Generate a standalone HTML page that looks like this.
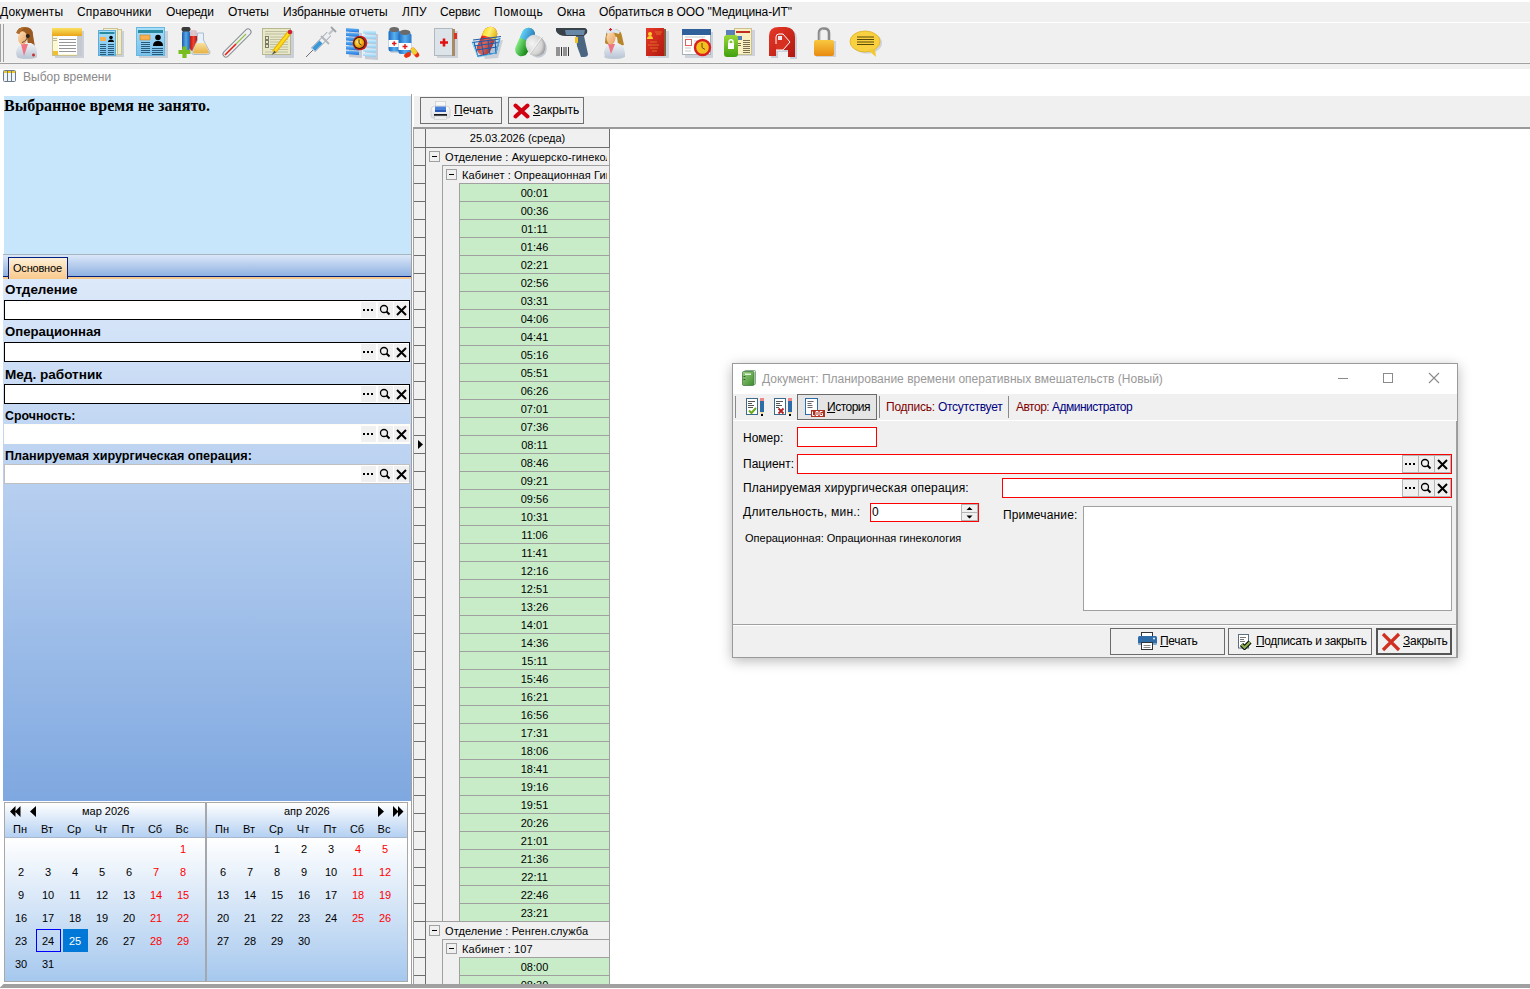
<!DOCTYPE html><html><head><meta charset="utf-8"><style>

*{box-sizing:border-box;margin:0;padding:0}
html,body{width:1530px;height:989px;overflow:hidden;background:#fff;font-family:"Liberation Sans",sans-serif;font-size:12px;color:#000}
.abs{position:absolute}
.t{position:absolute;white-space:nowrap;line-height:14px}
.u{text-decoration:underline}

</style></head><body>
<div class="abs" style="left:0;top:2px;width:1530px;height:20px;background:#f0f0f0"></div>
<div class="t" style="left:0px;top:5px;letter-spacing:0.15px">Документы</div>
<div class="t" style="left:77px;top:5px;letter-spacing:0.18px">Справочники</div>
<div class="t" style="left:166px;top:5px;letter-spacing:-0.2px">Очереди</div>
<div class="t" style="left:228px;top:5px;letter-spacing:-0.12px">Отчеты</div>
<div class="t" style="left:283px;top:5px;letter-spacing:0px">Избранные отчеты</div>
<div class="t" style="left:402px;top:5px;letter-spacing:0.3px">ЛПУ</div>
<div class="t" style="left:440px;top:5px;letter-spacing:-0.15px">Сервис</div>
<div class="t" style="left:494px;top:5px;letter-spacing:0.5px">Помощь</div>
<div class="t" style="left:557px;top:5px;letter-spacing:0.1px">Окна</div>
<div class="t" style="left:599px;top:5px;letter-spacing:-0.09px">Обратиться в ООО "Медицина-ИТ"</div>
<div class="abs" style="left:0;top:23px;width:1530px;height:40px;background:#f0f0f0"></div>
<div class="abs" style="left:0;top:62px;width:1530px;height:1px;background:#f4f4f4"></div>
<div class="abs" style="left:0;top:63px;width:1530px;height:1px;background:#a0a0a0"></div>
<div class="abs" style="left:0;top:64px;width:1530px;height:5px;background:#f0f0f0"></div>
<div class="abs" style="left:0;top:24px;width:1px;height:38px;background:#a0a0a0"></div>
<div class="abs" style="left:3px;top:24px;width:1px;height:38px;background:#a0a0a0"></div>

<svg class="abs" style="left:0;top:23px" width="900" height="40" viewBox="0 23 900 40">
<defs>
<linearGradient id="gY" x1="0" y1="0" x2="0" y2="1"><stop offset="0" stop-color="#fbe060"/><stop offset="1" stop-color="#e8a418"/></linearGradient>
<linearGradient id="gSkin" x1="0" y1="0" x2="1" y2="1"><stop offset="0" stop-color="#fde0b8"/><stop offset="1" stop-color="#e8a060"/></linearGradient>
<linearGradient id="gCoat" x1="0" y1="0" x2="0" y2="1"><stop offset="0" stop-color="#f0f4f8"/><stop offset="1" stop-color="#b8c4d4"/></linearGradient>
<linearGradient id="gBlue" x1="0" y1="0" x2="0" y2="1"><stop offset="0" stop-color="#a8e0fa"/><stop offset="1" stop-color="#78c0ec"/></linearGradient>
<linearGradient id="gRed" x1="0" y1="0" x2="1" y2="1"><stop offset="0" stop-color="#e83828"/><stop offset="1" stop-color="#b01810"/></linearGradient>
<linearGradient id="gOr" x1="0" y1="0" x2="0" y2="1"><stop offset="0" stop-color="#f8c840"/><stop offset="1" stop-color="#e88a10"/></linearGradient>
<linearGradient id="gGreen" x1="0" y1="0" x2="0" y2="1"><stop offset="0" stop-color="#98d838"/><stop offset="1" stop-color="#40a010"/></linearGradient>
</defs>
<!-- 1 operator -->
<ellipse cx="27" cy="57" rx="10" ry="2" fill="rgba(40,60,90,0.18)"/>
<path d="M17 33 Q17 27 25 27 Q33 27 33 35 L35 47 Q31 48 28 46 L27 37Z" fill="#9a5a20"/>
<path d="M16 53 Q17 45 23 43 L31 43 Q37 45 37 53 L37 57 Q27 60 17 57Z" fill="url(#gCoat)"/>
<path d="M21 44 L28 44 L24 56Z" fill="#f07484"/>
<ellipse cx="22.5" cy="38" rx="4.6" ry="6.8" fill="url(#gSkin)"/>
<path d="M16 33 Q18 26.5 26 27 Q21 29 19.5 34Z" fill="#b06c2c"/>
<path d="M27.5 36 Q27 41 22 42.5" stroke="#333" stroke-width="0.8" fill="none"/>
<circle cx="27.8" cy="36" r="2" fill="#222"/>
<path d="M32 55h3M33.5 53.5v3" stroke="#c83030" stroke-width="1.6"/>
<!-- 2 yellow window -->
<rect x="55" y="31" width="29" height="27" fill="rgba(70,90,130,0.22)"/>
<rect x="52.5" y="34.5" width="27" height="21" fill="#fbf8d4" stroke="#c8c090"/>
<rect x="58" y="36" width="19" height="18" fill="#fff"/>
<path d="M59 39.5h17M59 42.5h17M59 45.5h17M59 48.5h17M59 51.5h17" stroke="#8a8a8a" stroke-width="0.9"/>
<rect x="77" y="35" width="5" height="21" fill="#c4cad0"/>
<rect x="52" y="28" width="30" height="8" fill="url(#gY)"/>
<rect x="53" y="51" width="5" height="4" fill="#f0c030"/>
<path d="M53 38.5h4M53 40.5h4" stroke="#999" stroke-width="0.7"/>
<!-- 3 blue docs -->
<rect x="101" y="31" width="23" height="26" fill="rgba(70,90,130,0.22)"/>
<rect x="106.5" y="29.5" width="15" height="25" fill="#eeeacc" stroke="#c8c498"/>
<rect x="103.5" y="28.5" width="14" height="26" fill="#f4f0d0" stroke="#c8c498"/>
<rect x="98.5" y="30.5" width="17" height="25" fill="url(#gBlue)" stroke="#60acd8"/>
<rect x="99.5" y="32" width="15" height="2" fill="#2a8aa0"/>
<rect x="100" y="37" width="6" height="4" fill="#f8b050"/>
<circle cx="111" cy="37.5" r="1.8" fill="#000"/><path d="M108 42 Q108 39.5 111 39.5 Q114 39.5 114 42Z" fill="#000"/>
<path d="M100 44.5h6M100 46.5h6M100 48.5h6M100 50.5h6M100 52.5h6M100 54.5h6M108 44.5h6M108 46.5h6M108 48.5h6M108 50.5h6M108 52.5h6M108 54.5h6" stroke="#2a5a7a" stroke-width="1"/>
<!-- 4 blue card -->
<rect x="139" y="31" width="29" height="27" fill="rgba(70,90,130,0.22)"/>
<rect x="136.5" y="27.5" width="28" height="28" fill="url(#gBlue)" stroke="#68b8e0"/>
<rect x="138" y="30" width="25" height="3" fill="#2a8aa0"/>
<rect x="140" y="35" width="10" height="5" fill="#f8b050" stroke="#c88030" stroke-width="0.6"/>
<circle cx="158" cy="37.5" r="2.8" fill="#000"/><path d="M153 46 Q153 41 158 41 Q163 41 163 46Z" fill="#000"/>
<path d="M141 42.5h9M141 44.5h9M141 46.5h9M141 48.5h9M141 50.5h9M141 52.5h9M152 48.5h11M152 50.5h11M152 52.5h11M152 54.5h11" stroke="#2a5a7a" stroke-width="1"/>
<!-- 5 flasks -->
<defs><linearGradient id="gTube" x1="0" y1="0" x2="1" y2="0"><stop offset="0" stop-color="#1a5aa8"/><stop offset="0.5" stop-color="#58a8e8"/><stop offset="1" stop-color="#1a60b0"/></linearGradient>
<linearGradient id="gTubeR" x1="0" y1="0" x2="1" y2="0"><stop offset="0" stop-color="#b81810"/><stop offset="0.5" stop-color="#f04030"/><stop offset="1" stop-color="#b01810"/></linearGradient>
<linearGradient id="gFlask" x1="0" y1="0" x2="0" y2="1"><stop offset="0" stop-color="#f8e0a0"/><stop offset="1" stop-color="#e8b040"/></linearGradient></defs>
<rect x="190" y="30" width="7" height="21" rx="3" fill="url(#gTubeR)"/>
<rect x="190" y="30" width="7" height="6" fill="#dde8f4" opacity="0.8"/>
<rect x="182" y="30" width="8" height="21" rx="3.5" fill="url(#gTube)"/>
<rect x="181.5" y="27" width="9" height="4.5" rx="2" fill="#3a3a3a"/>
<path d="M197.5 33 L203.5 33 L203.5 40 L210 52 Q210.5 54.5 207.5 54.5 L194 54.5 Q191 54.5 192 52 L197.5 40Z" fill="#e8f0f8" stroke="#9ab0c8" stroke-width="0.8"/>
<path d="M196 43 L205 43 L209 52 Q209.5 53.5 207.5 53.5 L194.5 53.5 Q192.5 53.5 193 52Z" fill="url(#gFlask)"/>
<path d="M178.5 52h12M184.5 46.5v11.5" stroke="#78bc20" stroke-width="4.2"/>
<!-- 6 thermometer -->
<path d="M226 54 L248 32" stroke="#8a8e94" stroke-width="7" stroke-linecap="round"/>
<path d="M226 54 L248 32" stroke="#eef0f2" stroke-width="5" stroke-linecap="round"/>
<path d="M225 55 L236 44" stroke="#e02010" stroke-width="1.6"/>
<path d="M236 44 L246 34" stroke="#90c040" stroke-width="1.1"/>
<!-- 7 notepad -->
<rect x="265" y="31" width="29" height="27" fill="rgba(70,90,130,0.22)"/>
<rect x="262.5" y="28.5" width="28" height="26" fill="#e8e8c8" stroke="#b8b890"/>
<path d="M265 31.5h23M265 34h23M270 37h18M270 39.5h18M270 42h18M270 44.5h18M270 47h18M270 49.5h18M265 52h23" stroke="#b4b498" stroke-width="0.8"/>
<rect x="265.5" y="36.5" width="3" height="3" fill="none" stroke="#707060" stroke-width="0.9"/>
<rect x="265.5" y="40.5" width="3" height="3" fill="none" stroke="#707060" stroke-width="0.9"/>
<rect x="265.5" y="44.5" width="3" height="3" fill="none" stroke="#707060" stroke-width="0.9"/>
<path d="M274 52 L289 33" stroke="#e8b000" stroke-width="4.5"/>
<path d="M274 52 L289 33" stroke="#fcdc20" stroke-width="2.5"/>
<path d="M271.5 55 L274.5 50.5 L276 52.5Z" fill="#555"/>
<circle cx="290" cy="32" r="2.3" fill="#d02030"/>
<!-- 8 syringe -->
<path d="M306 57 L313 50" stroke="#707070" stroke-width="1"/>
<path d="M313 50 L329 34" stroke="#9aa0a8" stroke-width="6"/>
<path d="M313 50 L329 34" stroke="#eef0f4" stroke-width="4.5"/>
<path d="M313.5 49.5 L321 42" stroke="#3a98d8" stroke-width="4"/>
<path d="M321 36 L329 44" stroke="#b0b4b8" stroke-width="1.8"/>
<path d="M329 34 L334 29" stroke="#c0c4c8" stroke-width="2.2"/>
<path d="M331 27 L336 32" stroke="#a0a4a8" stroke-width="1.8"/>
<!-- 9 table+clock -->
<defs>
<linearGradient id="gBar" x1="0" y1="0" x2="0" y2="1"><stop offset="0" stop-color="#6ab8f8"/><stop offset="1" stop-color="#1a70d8"/></linearGradient>
<linearGradient id="gBar2" x1="0" y1="0" x2="0" y2="1"><stop offset="0" stop-color="#e0f4fe"/><stop offset="1" stop-color="#88ccf4"/></linearGradient>
<radialGradient id="gClk" cx="0.4" cy="0.4" r="0.6"><stop offset="0" stop-color="#fff0a0"/><stop offset="0.5" stop-color="#f8c020"/><stop offset="1" stop-color="#e08010"/></radialGradient>
</defs>
<path d="M349 32 L362 33 L362 58 L349 57Z" fill="rgba(70,90,130,0.25)"/>
<path d="M365 33 L378 34 L378 60 L365 59Z" fill="rgba(70,90,130,0.25)"/>
<g fill="url(#gBar)"><path d="M346 28 L359 29 L359 32.5 L346 31.5Z"/><path d="M346 32.5 L359 33.5 L359 37 L346 36Z"/><path d="M346 37 L359 38 L359 41.5 L346 40.5Z"/><path d="M346 41.5 L359 42.5 L359 46 L346 45Z"/><path d="M346 46 L359 47 L359 50.5 L346 49.5Z"/><path d="M346 50.5 L359 51.5 L359 55 L346 54Z"/></g>
<g fill="url(#gBar2)"><path d="M363 30 L376 31 L376 34.5 L363 33.5Z"/><path d="M363 34.5 L376 35.5 L376 39 L363 38Z"/><path d="M363 39 L376 40 L376 43.5 L363 42.5Z"/><path d="M363 43.5 L376 44.5 L376 48 L363 47Z"/><path d="M363 48 L376 49 L376 52.5 L363 51.5Z"/><path d="M363 52.5 L376 53.5 L376 57 L363 56Z"/></g>
<circle cx="360" cy="43" r="7.3" fill="#c81818"/>
<circle cx="359.3" cy="43" r="6" fill="#302010"/>
<circle cx="359.3" cy="43" r="5" fill="url(#gClk)"/>
<path d="M359 39.5 V43.5 L361.5 45" stroke="#503000" stroke-width="1" fill="none"/>
<!-- 10 vials -->
<defs><linearGradient id="gVial" x1="0" y1="0" x2="1" y2="0"><stop offset="0" stop-color="#1a68c0"/><stop offset="0.5" stop-color="#58b0f0"/><stop offset="1" stop-color="#2a78c8"/></linearGradient></defs>
<rect x="390" y="31" width="12" height="22" rx="2" fill="rgba(70,90,130,0.2)"/>
<rect x="388.5" y="30" width="11.5" height="21.5" rx="2.5" fill="url(#gVial)"/>
<rect x="388.5" y="40" width="11.5" height="7" fill="#fff"/>
<ellipse cx="394.2" cy="29.5" rx="4.8" ry="2.6" fill="#6a6a6a"/>
<path d="M392 43.5h4.5M394.2 41.2v4.6" stroke="#e01818" stroke-width="1.4"/>
<rect x="398.5" y="33" width="13" height="21" rx="2.5" fill="url(#gVial)"/>
<rect x="398.5" y="43" width="13" height="7" fill="#fff"/>
<ellipse cx="405" cy="32.3" rx="5.3" ry="2.6" fill="#6a6a6a"/>
<path d="M402.5 46.5h5M405 44v5" stroke="#e01818" stroke-width="1.4"/>
<path d="M413 50 L417 55" stroke="#e83010" stroke-width="4.6" stroke-linecap="round"/>
<path d="M413 50 L414.8 52.2" stroke="#f0d030" stroke-width="4.6" stroke-linecap="round"/>
<ellipse cx="407.5" cy="55" rx="3.6" ry="2.4" transform="rotate(-30 407.5 55)" fill="#e83010"/>
<!-- 11 red-cross book -->
<rect x="437" y="31" width="21" height="27" fill="rgba(70,90,130,0.2)"/>
<rect x="434.5" y="28.5" width="18" height="27" fill="#dce4ea" stroke="#b0b8c0"/>
<rect x="452" y="29" width="3" height="27" fill="#a88a64"/>
<rect x="454" y="33" width="3" height="6" fill="#e03020"/>
<path d="M440 42.5h8M444 38.5v8" stroke="#e01010" stroke-width="2.6"/>
<!-- 12 basket -->
<defs>
<linearGradient id="gCapY" x1="0" y1="0" x2="1" y2="0"><stop offset="0" stop-color="#f8e020"/><stop offset="0.4" stop-color="#fff070"/><stop offset="1" stop-color="#e0b010"/></linearGradient>
<linearGradient id="gCapR" x1="0" y1="0" x2="1" y2="0"><stop offset="0" stop-color="#e01808"/><stop offset="0.4" stop-color="#ff5030"/><stop offset="1" stop-color="#c01000"/></linearGradient>
<radialGradient id="gTab" cx="0.4" cy="0.35" r="0.7"><stop offset="0" stop-color="#f4f4f4"/><stop offset="0.7" stop-color="#d4d4d4"/><stop offset="1" stop-color="#909090"/></radialGradient>
<linearGradient id="gBlu2" x1="0" y1="0" x2="1" y2="0"><stop offset="0" stop-color="#60d0f8"/><stop offset="1" stop-color="#2a78b8"/></linearGradient>
<linearGradient id="gGrn2" x1="0" y1="0" x2="1" y2="0"><stop offset="0" stop-color="#80e880"/><stop offset="1" stop-color="#108010"/></linearGradient>
</defs>
<path d="M478 43 L503 40 L498 58 L485 59Z" fill="rgba(70,90,130,0.22)"/>
<g transform="rotate(24 487 41)">
<rect x="480" y="26" width="14" height="30" rx="7" fill="url(#gCapR)"/>
<path d="M480 38 V33 A7 7 0 0 1 494 33 V38 Q487 35 480 38Z" fill="url(#gCapY)"/>
</g>
<path d="M472 41 L500 37 L496 53 L478 57Z" fill="rgba(90,170,230,0.25)"/>
<path d="M473 40 L501 36.5 M472 42.5 L500 39 M474 46 L499 42.5 M476 50 L497 47 M478 56 L496 53 M474 42 L478 57 M481 41 L484 56 M488 40 L490 55 M495 39 L496 54 M500 38 L496 53" stroke="#1c5aa8" stroke-width="1" fill="none"/>
<path d="M472 42 L478 57 L496 53 L500 38" stroke="#50c0f0" stroke-width="0.8" fill="none"/>
<!-- 13 pills -->

<g transform="translate(3 0) rotate(24 522 42)">
<rect x="515.5" y="27" width="13" height="30" rx="6.5" fill="url(#gGrn2)"/>
<path d="M515.5 40 V33.5 A6.5 6.5 0 0 1 528.5 33.5 V40Z" fill="url(#gBlu2)"/>
</g>
<ellipse cx="537" cy="47" rx="9.5" ry="11" transform="rotate(-30 537 47)" fill="rgba(70,90,130,0.25)"/>
<ellipse cx="535.5" cy="45.5" rx="9.5" ry="11" transform="rotate(-30 535.5 45.5)" fill="url(#gTab)"/>
<path d="M529 54.5 L542 36.5" stroke="#f8f8f8" stroke-width="0.9"/>
<path d="M530 55 L543 37" stroke="#b8b8b8" stroke-width="0.5"/>
<!-- 14 scanner -->
<path d="M556 28 L585 28 Q588 29 587 33 L584 36 L566 36 Q558 36 556 31Z" fill="#384048"/>
<path d="M565 30 L585 30 L584 35 L566 35Z" fill="#6888a8"/>
<path d="M576 36 L584 36 L588 54 Q588 57 584 57 L581 57 L577 46Z" fill="#4a6680"/>
<rect x="575" y="37" width="3" height="6" fill="#f0c020"/>
<path d="M557 47v9M559 47v9M561.5 47v9M564 47v9M566 47v9M568.5 47v9" stroke="#333" stroke-width="1"/>
<!-- 15 nurse -->
<ellipse cx="614" cy="57" rx="10" ry="2" fill="rgba(40,60,90,0.18)"/>
<path d="M606 35 Q606 29 614 29 Q621 29 622 36 L624 45 Q620 46 618 44 L617 37Z" fill="#b8862a"/><path d="M606.5 33 Q605 38 605 43 Q607 45 609 44 L608 36Z" fill="#b8862a"/>
<path d="M604 53 Q605 45 610 43 L618 43 Q624 45 625 53 L625 57 Q614 60 605 57Z" fill="url(#gCoat)"/>
<path d="M608 44 L615 44 L611 54Z" fill="#f07484"/>
<ellipse cx="611" cy="38" rx="4.5" ry="6.5" fill="url(#gSkin)"/>
<path d="M606 31 Q612 26 620 31 L619 34 Q612 31 607 34Z" fill="#dce6f2"/>
<path d="M609 29.5h3M610.5 28v3" stroke="#d02020" stroke-width="1.2"/>
<!-- 16 red book -->
<rect x="648" y="31" width="21" height="27" fill="rgba(70,90,130,0.2)"/>
<rect x="646" y="28" width="18" height="28" fill="url(#gRed)"/>
<rect x="664" y="29" width="2" height="27" fill="#806040"/>
<circle cx="650" cy="34" r="2" fill="#f8d030"/><path d="M647 39 Q647 36 650 36 Q653 36 653 39Z" fill="#f8d030"/>
<path d="M655 32h7M656 34h5M650 42h7M648 45h11M650 48h8M652 51h5" stroke="#f0a030" stroke-width="0.6"/>
<!-- 17 calendar+clock -->
<rect x="685" y="32" width="28" height="26" fill="rgba(70,90,130,0.2)"/>
<rect x="682.5" y="29.5" width="28" height="25" fill="#fff" stroke="#a8b0b8"/>
<rect x="682" y="29" width="29" height="6" fill="#30609a"/>
<rect x="685.5" y="39.5" width="6" height="6" fill="none" stroke="#e06060"/>
<path d="M685 37h20M694 41h5M694 44h5M685 48h6M685 51h6" stroke="#b0b0b0" stroke-width="0.7"/>
<circle cx="702.5" cy="47.5" r="7.5" fill="#f4c020" stroke="#d82020" stroke-width="2.4"/>
<path d="M702 43 V47.5 L705 49.5" stroke="#6a4a00" stroke-width="1" fill="none"/>
<!-- 18 usb+doc -->
<rect x="736" y="30" width="19" height="26" fill="rgba(70,90,130,0.2)"/>
<rect x="734.5" y="28.5" width="17" height="26" fill="#f8f0c0" stroke="#c8c090"/>
<rect x="736" y="31" width="14" height="2" fill="#c03020"/>
<rect x="737" y="36" width="5" height="4" fill="#5080c0"/>
<path d="M743 40.5h7M743 42.5h7M743 44.5h7M743 46.5h7M743 48.5h7M743 50.5h7M743 52.5h7M737 43.5h4M737 45.5h4" stroke="#7a7050" stroke-width="1"/>
<rect x="726" y="30" width="9" height="6" fill="#5a80b8"/>
<rect x="724" y="35" width="14" height="22" rx="3" fill="url(#gGreen)"/>
<rect x="728" y="43" width="6" height="6" fill="#fff"/>
<path d="M729 43 V41 Q731 38.5 733 41 V43" stroke="#fff" stroke-width="1.3" fill="none"/>
<!-- 19 red A -->
<path d="M771 58 L771 38 Q771 29 781 29 L788 29 Q797 30 797 39 L797 59 L790 59 L790 52 L778 52 L778 58Z" fill="rgba(70,90,130,0.22)"/>
<path d="M769 56 L769 36 Q769 27 779 27 L786 27 Q795 28 795 37 L795 57 L788 57 L788 50 L776 50 L776 56Z" fill="url(#gRed)"/>
<path d="M776 44 L776 37 Q776 34 779 34 L783 34 L790 42 L783 50 L776 50" stroke="#fff" stroke-width="1" fill="#d83020"/>
<path d="M778 36 L782 36 L782 40 L778 40Z" fill="#e8e8f0"/>
<!-- 20 lock -->
<path d="M819 42 L819 33 Q819 28.5 824 28.5 Q829 28.5 829 33 L829 42" stroke="#8a8a8a" stroke-width="2.6" fill="none"/><path d="M820 41 L820 33 Q820 30 823 29.5" stroke="#d8d8d8" stroke-width="0.8" fill="none"/>
<rect x="816" y="41" width="20" height="16" fill="rgba(70,90,130,0.2)"/>
<rect x="814" y="40" width="20" height="16" rx="2" fill="url(#gOr)"/>
<!-- 21 speech -->
<ellipse cx="867" cy="43" rx="15" ry="10.5" fill="rgba(70,90,130,0.2)"/>
<ellipse cx="865" cy="41.5" rx="15" ry="10.5" fill="#f8d040" stroke="#e0b020" stroke-width="0.8"/>
<path d="M868 50 L876 57 L875 49Z" fill="#f0c830"/>
<path d="M857 37h17M857 39.5h17M857 42h17M857 44.5h17" stroke="#5a4a08" stroke-width="1"/>
</svg>

<div class="t" style="left:23px;top:70px;color:#8a8a8a">Выбор времени</div>
<svg class="abs" style="left:3px;top:70px" width="14" height="13"><rect x="0.5" y="0.5" width="12" height="11" rx="1" fill="#eef6fc" stroke="#6a7a88"/><rect x="1" y="1" width="11" height="2" fill="#f0c820"/><path d="M4.5 1v11M8.5 1v11" stroke="#6a7a88"/></svg>
<div class="abs" style="left:4px;top:96px;width:407px;height:158px;background:#c8e6fb"></div>
<div class="t" style="left:4px;top:97px;font:bold 16px 'Liberation Serif',serif;line-height:18px">Выбранное время не занято.</div>
<div class="abs" style="left:3px;top:254px;width:408px;height:1px;background:#a8b4c0"></div>
<div class="abs" style="left:3px;top:255px;width:408px;height:21px;background:linear-gradient(#dbe7f8,#8fb1e2)"></div>
<div class="abs" style="left:3px;top:276px;width:408px;height:1px;background:#00207f"></div>
<div class="abs" style="left:3px;top:277px;width:408px;height:2px;background:#f8c88a"></div>
<div class="abs" style="left:8px;top:257px;width:60px;height:22px;border:1px solid #00207f;border-bottom:none;background:linear-gradient(#fdf0d8,#f9c98c)"></div>
<div class="t" style="left:13px;top:261px;font-size:11px;letter-spacing:-0.2px">Основное</div>
<div class="abs" style="left:3px;top:279px;width:408px;height:522px;background:linear-gradient(#dce9fa,#7fa8e0)"></div>
<div class="t" style="left:5px;top:283px;font-weight:bold;transform:scaleX(1.12);transform-origin:0 0">Отделение</div>
<div class="abs" style="left:4px;top:300px;width:406px;height:20px;background:#fff;border:1px solid #000"></div>
<div class="abs" style="left:361px;top:302px;width:15px;height:16px;background:#f0f0f0"></div>
<div class="abs" style="left:378px;top:302px;width:15px;height:16px;background:#f0f0f0"></div>
<div class="abs" style="left:394px;top:302px;width:15px;height:16px;background:#f0f0f0"></div>
<div class="abs" style="left:363px;top:309px;width:2px;height:2px;background:#000;box-shadow:4px 0 #000,8px 0 #000"></div>
<svg class="abs" style="left:379px;top:304px" width="13" height="13"><circle cx="5" cy="5" r="3.5" fill="none" stroke="#000" stroke-width="1.3"/><line x1="7.5" y1="7.5" x2="10.5" y2="10.5" stroke="#000" stroke-width="2"/></svg>
<svg class="abs" style="left:395px;top:304px" width="13" height="13"><path d="M2 2L11 11M11 2L2 11" stroke="#000" stroke-width="2"/></svg>
<div class="t" style="left:5px;top:325px;font-weight:bold;transform:scaleX(1.097);transform-origin:0 0">Операционная</div>
<div class="abs" style="left:4px;top:342px;width:406px;height:20px;background:#fff;border:1px solid #000"></div>
<div class="abs" style="left:361px;top:344px;width:15px;height:16px;background:#f0f0f0"></div>
<div class="abs" style="left:378px;top:344px;width:15px;height:16px;background:#f0f0f0"></div>
<div class="abs" style="left:394px;top:344px;width:15px;height:16px;background:#f0f0f0"></div>
<div class="abs" style="left:363px;top:351px;width:2px;height:2px;background:#000;box-shadow:4px 0 #000,8px 0 #000"></div>
<svg class="abs" style="left:379px;top:346px" width="13" height="13"><circle cx="5" cy="5" r="3.5" fill="none" stroke="#000" stroke-width="1.3"/><line x1="7.5" y1="7.5" x2="10.5" y2="10.5" stroke="#000" stroke-width="2"/></svg>
<svg class="abs" style="left:395px;top:346px" width="13" height="13"><path d="M2 2L11 11M11 2L2 11" stroke="#000" stroke-width="2"/></svg>
<div class="t" style="left:5px;top:368px;font-weight:bold;transform:scaleX(1.13);transform-origin:0 0">Мед. работник</div>
<div class="abs" style="left:4px;top:384px;width:406px;height:20px;background:#fff;border:1px solid #000"></div>
<div class="abs" style="left:361px;top:386px;width:15px;height:16px;background:#f0f0f0"></div>
<div class="abs" style="left:378px;top:386px;width:15px;height:16px;background:#f0f0f0"></div>
<div class="abs" style="left:394px;top:386px;width:15px;height:16px;background:#f0f0f0"></div>
<div class="abs" style="left:363px;top:393px;width:2px;height:2px;background:#000;box-shadow:4px 0 #000,8px 0 #000"></div>
<svg class="abs" style="left:379px;top:388px" width="13" height="13"><circle cx="5" cy="5" r="3.5" fill="none" stroke="#000" stroke-width="1.3"/><line x1="7.5" y1="7.5" x2="10.5" y2="10.5" stroke="#000" stroke-width="2"/></svg>
<svg class="abs" style="left:395px;top:388px" width="13" height="13"><path d="M2 2L11 11M11 2L2 11" stroke="#000" stroke-width="2"/></svg>
<div class="t" style="left:5px;top:409px;font-weight:bold;transform:scaleX(1.03);transform-origin:0 0">Срочность:</div>
<div class="abs" style="left:4px;top:424px;width:406px;height:20px;background:#fff;border:1px solid #fffdf4"></div>
<div class="abs" style="left:361px;top:426px;width:15px;height:16px;background:#f0f0f0"></div>
<div class="abs" style="left:378px;top:426px;width:15px;height:16px;background:#f0f0f0"></div>
<div class="abs" style="left:394px;top:426px;width:15px;height:16px;background:#f0f0f0"></div>
<div class="abs" style="left:363px;top:433px;width:2px;height:2px;background:#000;box-shadow:4px 0 #000,8px 0 #000"></div>
<svg class="abs" style="left:379px;top:428px" width="13" height="13"><circle cx="5" cy="5" r="3.5" fill="none" stroke="#000" stroke-width="1.3"/><line x1="7.5" y1="7.5" x2="10.5" y2="10.5" stroke="#000" stroke-width="2"/></svg>
<svg class="abs" style="left:395px;top:428px" width="13" height="13"><path d="M2 2L11 11M11 2L2 11" stroke="#000" stroke-width="2"/></svg>
<div class="t" style="left:5px;top:449px;font-weight:bold;transform:scaleX(1.05);transform-origin:0 0">Планируемая хирургическая операция:</div>
<div class="abs" style="left:4px;top:464px;width:406px;height:20px;background:#fff;border:1px solid #c0c0c0"></div>
<div class="abs" style="left:361px;top:466px;width:15px;height:16px;background:#f0f0f0"></div>
<div class="abs" style="left:378px;top:466px;width:15px;height:16px;background:#f0f0f0"></div>
<div class="abs" style="left:394px;top:466px;width:15px;height:16px;background:#f0f0f0"></div>
<div class="abs" style="left:363px;top:473px;width:2px;height:2px;background:#000;box-shadow:4px 0 #000,8px 0 #000"></div>
<svg class="abs" style="left:379px;top:468px" width="13" height="13"><circle cx="5" cy="5" r="3.5" fill="none" stroke="#000" stroke-width="1.3"/><line x1="7.5" y1="7.5" x2="10.5" y2="10.5" stroke="#000" stroke-width="2"/></svg>
<svg class="abs" style="left:395px;top:468px" width="13" height="13"><path d="M2 2L11 11M11 2L2 11" stroke="#000" stroke-width="2"/></svg>
<div class="abs" style="left:4px;top:801px;width:407px;height:183px;background:#fff"></div>
<div class="abs" style="left:4px;top:802px;width:404px;height:180px;border:1px solid #a8a8a8;background:#fff"></div>
<div class="abs" style="left:5px;top:803px;width:200px;height:34px;background:linear-gradient(#fff,#b4d0f2)"></div>
<div class="t" style="left:82px;top:804px;font-size:11px">мар 2026</div>
<div class="t" style="left:6px;top:822px;width:28px;text-align:center;font-size:11px">Пн</div>
<div class="t" style="left:33px;top:822px;width:28px;text-align:center;font-size:11px">Вт</div>
<div class="t" style="left:60px;top:822px;width:28px;text-align:center;font-size:11px">Ср</div>
<div class="t" style="left:87px;top:822px;width:28px;text-align:center;font-size:11px">Чт</div>
<div class="t" style="left:114px;top:822px;width:28px;text-align:center;font-size:11px">Пт</div>
<div class="t" style="left:141px;top:822px;width:28px;text-align:center;font-size:11px">Сб</div>
<div class="t" style="left:168px;top:822px;width:28px;text-align:center;font-size:11px">Вс</div>
<div class="abs" style="left:5px;top:837px;width:200px;height:1px;background:#a8b8cc"></div>
<div class="abs" style="left:5px;top:838px;width:200px;height:143px;background:linear-gradient(#fff,#a6c8ee)"></div>
<div class="t" style="left:169px;top:842px;width:28px;text-align:center;font-size:11px;color:#f00">1</div>
<div class="t" style="left:7px;top:865px;width:28px;text-align:center;font-size:11px;color:#000">2</div>
<div class="t" style="left:34px;top:865px;width:28px;text-align:center;font-size:11px;color:#000">3</div>
<div class="t" style="left:61px;top:865px;width:28px;text-align:center;font-size:11px;color:#000">4</div>
<div class="t" style="left:88px;top:865px;width:28px;text-align:center;font-size:11px;color:#000">5</div>
<div class="t" style="left:115px;top:865px;width:28px;text-align:center;font-size:11px;color:#000">6</div>
<div class="t" style="left:142px;top:865px;width:28px;text-align:center;font-size:11px;color:#f00">7</div>
<div class="t" style="left:169px;top:865px;width:28px;text-align:center;font-size:11px;color:#f00">8</div>
<div class="t" style="left:7px;top:888px;width:28px;text-align:center;font-size:11px;color:#000">9</div>
<div class="t" style="left:34px;top:888px;width:28px;text-align:center;font-size:11px;color:#000">10</div>
<div class="t" style="left:61px;top:888px;width:28px;text-align:center;font-size:11px;color:#000">11</div>
<div class="t" style="left:88px;top:888px;width:28px;text-align:center;font-size:11px;color:#000">12</div>
<div class="t" style="left:115px;top:888px;width:28px;text-align:center;font-size:11px;color:#000">13</div>
<div class="t" style="left:142px;top:888px;width:28px;text-align:center;font-size:11px;color:#f00">14</div>
<div class="t" style="left:169px;top:888px;width:28px;text-align:center;font-size:11px;color:#f00">15</div>
<div class="t" style="left:7px;top:911px;width:28px;text-align:center;font-size:11px;color:#000">16</div>
<div class="t" style="left:34px;top:911px;width:28px;text-align:center;font-size:11px;color:#000">17</div>
<div class="t" style="left:61px;top:911px;width:28px;text-align:center;font-size:11px;color:#000">18</div>
<div class="t" style="left:88px;top:911px;width:28px;text-align:center;font-size:11px;color:#000">19</div>
<div class="t" style="left:115px;top:911px;width:28px;text-align:center;font-size:11px;color:#000">20</div>
<div class="t" style="left:142px;top:911px;width:28px;text-align:center;font-size:11px;color:#f00">21</div>
<div class="t" style="left:169px;top:911px;width:28px;text-align:center;font-size:11px;color:#f00">22</div>
<div class="t" style="left:7px;top:934px;width:28px;text-align:center;font-size:11px;color:#000">23</div>
<div class="abs" style="left:36px;top:929px;width:25px;height:23px;border:1px solid #0000ff"></div>
<div class="t" style="left:34px;top:934px;width:28px;text-align:center;font-size:11px;color:#000">24</div>
<div class="abs" style="left:63px;top:929px;width:25px;height:23px;background:#0078d7"></div>
<div class="t" style="left:61px;top:934px;width:28px;text-align:center;font-size:11px;color:#fff">25</div>
<div class="t" style="left:88px;top:934px;width:28px;text-align:center;font-size:11px;color:#000">26</div>
<div class="t" style="left:115px;top:934px;width:28px;text-align:center;font-size:11px;color:#000">27</div>
<div class="t" style="left:142px;top:934px;width:28px;text-align:center;font-size:11px;color:#f00">28</div>
<div class="t" style="left:169px;top:934px;width:28px;text-align:center;font-size:11px;color:#f00">29</div>
<div class="t" style="left:7px;top:957px;width:28px;text-align:center;font-size:11px;color:#000">30</div>
<div class="t" style="left:34px;top:957px;width:28px;text-align:center;font-size:11px;color:#000">31</div>
<div class="abs" style="left:207px;top:803px;width:200px;height:34px;background:linear-gradient(#fff,#b4d0f2)"></div>
<div class="t" style="left:284px;top:804px;font-size:11px">апр 2026</div>
<div class="t" style="left:208px;top:822px;width:28px;text-align:center;font-size:11px">Пн</div>
<div class="t" style="left:235px;top:822px;width:28px;text-align:center;font-size:11px">Вт</div>
<div class="t" style="left:262px;top:822px;width:28px;text-align:center;font-size:11px">Ср</div>
<div class="t" style="left:289px;top:822px;width:28px;text-align:center;font-size:11px">Чт</div>
<div class="t" style="left:316px;top:822px;width:28px;text-align:center;font-size:11px">Пт</div>
<div class="t" style="left:343px;top:822px;width:28px;text-align:center;font-size:11px">Сб</div>
<div class="t" style="left:370px;top:822px;width:28px;text-align:center;font-size:11px">Вс</div>
<div class="abs" style="left:207px;top:837px;width:200px;height:1px;background:#a8b8cc"></div>
<div class="abs" style="left:207px;top:838px;width:200px;height:143px;background:linear-gradient(#fff,#a6c8ee)"></div>
<div class="t" style="left:263px;top:842px;width:28px;text-align:center;font-size:11px;color:#000">1</div>
<div class="t" style="left:290px;top:842px;width:28px;text-align:center;font-size:11px;color:#000">2</div>
<div class="t" style="left:317px;top:842px;width:28px;text-align:center;font-size:11px;color:#000">3</div>
<div class="t" style="left:344px;top:842px;width:28px;text-align:center;font-size:11px;color:#f00">4</div>
<div class="t" style="left:371px;top:842px;width:28px;text-align:center;font-size:11px;color:#f00">5</div>
<div class="t" style="left:209px;top:865px;width:28px;text-align:center;font-size:11px;color:#000">6</div>
<div class="t" style="left:236px;top:865px;width:28px;text-align:center;font-size:11px;color:#000">7</div>
<div class="t" style="left:263px;top:865px;width:28px;text-align:center;font-size:11px;color:#000">8</div>
<div class="t" style="left:290px;top:865px;width:28px;text-align:center;font-size:11px;color:#000">9</div>
<div class="t" style="left:317px;top:865px;width:28px;text-align:center;font-size:11px;color:#000">10</div>
<div class="t" style="left:344px;top:865px;width:28px;text-align:center;font-size:11px;color:#f00">11</div>
<div class="t" style="left:371px;top:865px;width:28px;text-align:center;font-size:11px;color:#f00">12</div>
<div class="t" style="left:209px;top:888px;width:28px;text-align:center;font-size:11px;color:#000">13</div>
<div class="t" style="left:236px;top:888px;width:28px;text-align:center;font-size:11px;color:#000">14</div>
<div class="t" style="left:263px;top:888px;width:28px;text-align:center;font-size:11px;color:#000">15</div>
<div class="t" style="left:290px;top:888px;width:28px;text-align:center;font-size:11px;color:#000">16</div>
<div class="t" style="left:317px;top:888px;width:28px;text-align:center;font-size:11px;color:#000">17</div>
<div class="t" style="left:344px;top:888px;width:28px;text-align:center;font-size:11px;color:#f00">18</div>
<div class="t" style="left:371px;top:888px;width:28px;text-align:center;font-size:11px;color:#f00">19</div>
<div class="t" style="left:209px;top:911px;width:28px;text-align:center;font-size:11px;color:#000">20</div>
<div class="t" style="left:236px;top:911px;width:28px;text-align:center;font-size:11px;color:#000">21</div>
<div class="t" style="left:263px;top:911px;width:28px;text-align:center;font-size:11px;color:#000">22</div>
<div class="t" style="left:290px;top:911px;width:28px;text-align:center;font-size:11px;color:#000">23</div>
<div class="t" style="left:317px;top:911px;width:28px;text-align:center;font-size:11px;color:#000">24</div>
<div class="t" style="left:344px;top:911px;width:28px;text-align:center;font-size:11px;color:#f00">25</div>
<div class="t" style="left:371px;top:911px;width:28px;text-align:center;font-size:11px;color:#f00">26</div>
<div class="t" style="left:209px;top:934px;width:28px;text-align:center;font-size:11px;color:#000">27</div>
<div class="t" style="left:236px;top:934px;width:28px;text-align:center;font-size:11px;color:#000">28</div>
<div class="t" style="left:263px;top:934px;width:28px;text-align:center;font-size:11px;color:#000">29</div>
<div class="t" style="left:290px;top:934px;width:28px;text-align:center;font-size:11px;color:#000">30</div>
<div class="abs" style="left:205px;top:803px;width:2px;height:178px;background:#a4a8ae"></div>
<svg class="abs" style="left:9px;top:805px" width="30" height="13"><path d="M1 6.5L6.5 1V12Z M6 6.5L11.5 1V12Z M21 6.5L27 1V12Z" fill="#000"/></svg>
<svg class="abs" style="left:377px;top:805px" width="30" height="13"><path d="M1 1L7 6.5L1 12Z M16 1L21.5 6.5L16 12Z M21 1L26.5 6.5L21 12Z" fill="#000"/></svg>
<div class="abs" style="left:411px;top:94px;width:1px;height:890px;background:#a0a0a0"></div>
<div class="abs" style="left:414px;top:96px;width:1116px;height:31px;background:#f0f0f0"></div>
<div class="abs" style="left:413px;top:127px;width:1117px;height:2px;background:#9a9a9a"></div>
<div class="abs" style="left:420px;top:97px;width:82px;height:27px;border:1px solid #707070;background:#f0f0f0"></div>
<div class="t" style="left:454px;top:103px"><span class="u">П</span>ечать</div>
<div class="abs" style="left:508px;top:97px;width:76px;height:27px;border:1px solid #707070;background:#f0f0f0"></div>
<div class="t" style="left:533px;top:103px"><span class="u">З</span>акрыть</div>

<svg class="abs" style="left:428px;top:99px" width="24" height="24" viewBox="428 99 24 24">
<defs><linearGradient id="gPr" x1="0" y1="0" x2="0" y2="1"><stop offset="0" stop-color="#ffffff"/><stop offset="1" stop-color="#d8dce0"/></linearGradient></defs>
<rect x="435.5" y="101.5" width="10" height="6" fill="#f8f8f8" stroke="#d0d0d0" stroke-width="0.8"/>
<path d="M431 110 Q431 106 435 106 L446 106 Q450 106 450 110 L450 116 Q450 118 448 118 L433 118 Q431 118 431 116Z" fill="url(#gPr)" stroke="#c8ccd0" stroke-width="0.8"/>
<rect x="435" y="106.5" width="11" height="5.5" fill="#4a80d8"/>
<rect x="435" y="110" width="11" height="2" fill="#2a5ab8"/>
<rect x="434" y="114" width="13" height="2" fill="#1a1a1a"/>
<rect x="434.5" y="116" width="12" height="3.5" fill="#eceef0" stroke="#c8c8c8" stroke-width="0.6"/>
</svg>
<svg class="abs" style="left:513px;top:103px" width="18" height="16">
<path d="M2.5 2.5L14.5 13.5M14.5 2.5L2.5 13.5" stroke="#d00010" stroke-width="4" stroke-linecap="round"/>
</svg>

<div class="abs" style="left:0;top:0;width:1530px;height:984px;overflow:hidden">
<div class="abs" style="left:413px;top:129px;width:1px;height:855px;background:#a0a0a0"></div>
<div class="abs" style="left:412px;top:129px;width:1px;height:855px;background:#fff"></div>
<div class="abs" style="left:414px;top:129px;width:11px;height:855px;background:#f0f0f0"></div>
<div class="abs" style="left:425px;top:129px;width:1px;height:855px;background:#6e6e6e"></div>
<div class="abs" style="left:426px;top:129px;width:183px;height:18px;background:#f0f0f0"></div>
<div class="abs" style="left:414px;top:147px;width:196px;height:1px;background:#6e6e6e"></div>
<div class="abs" style="left:609px;top:129px;width:1px;height:19px;background:#6e6e6e"></div>
<div class="t" style="left:426px;top:131px;width:183px;text-align:center;font-size:11px">25.03.2026 (среда)</div>
<div class="abs" style="left:414px;top:165px;width:11px;height:1px;background:#6e6e6e"></div>
<div class="abs" style="left:414px;top:183px;width:11px;height:1px;background:#6e6e6e"></div>
<div class="abs" style="left:414px;top:201px;width:11px;height:1px;background:#6e6e6e"></div>
<div class="abs" style="left:414px;top:219px;width:11px;height:1px;background:#6e6e6e"></div>
<div class="abs" style="left:414px;top:237px;width:11px;height:1px;background:#6e6e6e"></div>
<div class="abs" style="left:414px;top:255px;width:11px;height:1px;background:#6e6e6e"></div>
<div class="abs" style="left:414px;top:273px;width:11px;height:1px;background:#6e6e6e"></div>
<div class="abs" style="left:414px;top:291px;width:11px;height:1px;background:#6e6e6e"></div>
<div class="abs" style="left:414px;top:309px;width:11px;height:1px;background:#6e6e6e"></div>
<div class="abs" style="left:414px;top:327px;width:11px;height:1px;background:#6e6e6e"></div>
<div class="abs" style="left:414px;top:345px;width:11px;height:1px;background:#6e6e6e"></div>
<div class="abs" style="left:414px;top:363px;width:11px;height:1px;background:#6e6e6e"></div>
<div class="abs" style="left:414px;top:381px;width:11px;height:1px;background:#6e6e6e"></div>
<div class="abs" style="left:414px;top:399px;width:11px;height:1px;background:#6e6e6e"></div>
<div class="abs" style="left:414px;top:417px;width:11px;height:1px;background:#6e6e6e"></div>
<div class="abs" style="left:414px;top:435px;width:11px;height:1px;background:#6e6e6e"></div>
<div class="abs" style="left:414px;top:453px;width:11px;height:1px;background:#6e6e6e"></div>
<div class="abs" style="left:414px;top:471px;width:11px;height:1px;background:#6e6e6e"></div>
<div class="abs" style="left:414px;top:489px;width:11px;height:1px;background:#6e6e6e"></div>
<div class="abs" style="left:414px;top:507px;width:11px;height:1px;background:#6e6e6e"></div>
<div class="abs" style="left:414px;top:525px;width:11px;height:1px;background:#6e6e6e"></div>
<div class="abs" style="left:414px;top:543px;width:11px;height:1px;background:#6e6e6e"></div>
<div class="abs" style="left:414px;top:561px;width:11px;height:1px;background:#6e6e6e"></div>
<div class="abs" style="left:414px;top:579px;width:11px;height:1px;background:#6e6e6e"></div>
<div class="abs" style="left:414px;top:597px;width:11px;height:1px;background:#6e6e6e"></div>
<div class="abs" style="left:414px;top:615px;width:11px;height:1px;background:#6e6e6e"></div>
<div class="abs" style="left:414px;top:633px;width:11px;height:1px;background:#6e6e6e"></div>
<div class="abs" style="left:414px;top:651px;width:11px;height:1px;background:#6e6e6e"></div>
<div class="abs" style="left:414px;top:669px;width:11px;height:1px;background:#6e6e6e"></div>
<div class="abs" style="left:414px;top:687px;width:11px;height:1px;background:#6e6e6e"></div>
<div class="abs" style="left:414px;top:705px;width:11px;height:1px;background:#6e6e6e"></div>
<div class="abs" style="left:414px;top:723px;width:11px;height:1px;background:#6e6e6e"></div>
<div class="abs" style="left:414px;top:741px;width:11px;height:1px;background:#6e6e6e"></div>
<div class="abs" style="left:414px;top:759px;width:11px;height:1px;background:#6e6e6e"></div>
<div class="abs" style="left:414px;top:777px;width:11px;height:1px;background:#6e6e6e"></div>
<div class="abs" style="left:414px;top:795px;width:11px;height:1px;background:#6e6e6e"></div>
<div class="abs" style="left:414px;top:813px;width:11px;height:1px;background:#6e6e6e"></div>
<div class="abs" style="left:414px;top:831px;width:11px;height:1px;background:#6e6e6e"></div>
<div class="abs" style="left:414px;top:849px;width:11px;height:1px;background:#6e6e6e"></div>
<div class="abs" style="left:414px;top:867px;width:11px;height:1px;background:#6e6e6e"></div>
<div class="abs" style="left:414px;top:885px;width:11px;height:1px;background:#6e6e6e"></div>
<div class="abs" style="left:414px;top:903px;width:11px;height:1px;background:#6e6e6e"></div>
<div class="abs" style="left:414px;top:921px;width:11px;height:1px;background:#6e6e6e"></div>
<div class="abs" style="left:414px;top:939px;width:11px;height:1px;background:#6e6e6e"></div>
<div class="abs" style="left:414px;top:957px;width:11px;height:1px;background:#6e6e6e"></div>
<div class="abs" style="left:414px;top:975px;width:11px;height:1px;background:#6e6e6e"></div>
<div class="abs" style="left:426px;top:148px;width:183px;height:836px;background:#f0f0f0"></div>
<div class="abs" style="left:609px;top:148px;width:1px;height:836px;background:#a0a0a0"></div>
<div class="abs" style="left:429px;top:151px;width:11px;height:11px;border:1px solid #a0a0a0;background:#f0f0f0"></div>
<div class="abs" style="left:432px;top:156px;width:5px;height:1px;background:#000"></div>
<div class="t" style="left:445px;top:150px;width:162px;overflow:hidden;font-size:11px;letter-spacing:0.1px">Отделение : Акушерско-гинекологическое</div>
<div class="abs" style="left:442px;top:165px;width:167px;height:1px;background:#a0a0a0"></div>
<div class="abs" style="left:442px;top:165px;width:1px;height:756px;background:#a0a0a0"></div>
<div class="abs" style="left:446px;top:169px;width:11px;height:11px;border:1px solid #a0a0a0;background:#f0f0f0"></div>
<div class="abs" style="left:449px;top:174px;width:5px;height:1px;background:#000"></div>
<div class="t" style="left:462px;top:168px;width:145px;overflow:hidden;font-size:11px;letter-spacing:0.1px">Кабинет : Опреационная Гинекология</div>
<div class="abs" style="left:459px;top:183px;width:151px;height:19px;border:1px solid #a0a0a0;background:#c8ecc8"></div>
<div class="t" style="left:460px;top:186px;width:149px;text-align:center;font-size:11px">00:01</div>
<div class="abs" style="left:459px;top:201px;width:151px;height:19px;border:1px solid #a0a0a0;background:#c8ecc8"></div>
<div class="t" style="left:460px;top:204px;width:149px;text-align:center;font-size:11px">00:36</div>
<div class="abs" style="left:459px;top:219px;width:151px;height:19px;border:1px solid #a0a0a0;background:#c8ecc8"></div>
<div class="t" style="left:460px;top:222px;width:149px;text-align:center;font-size:11px">01:11</div>
<div class="abs" style="left:459px;top:237px;width:151px;height:19px;border:1px solid #a0a0a0;background:#c8ecc8"></div>
<div class="t" style="left:460px;top:240px;width:149px;text-align:center;font-size:11px">01:46</div>
<div class="abs" style="left:459px;top:255px;width:151px;height:19px;border:1px solid #a0a0a0;background:#c8ecc8"></div>
<div class="t" style="left:460px;top:258px;width:149px;text-align:center;font-size:11px">02:21</div>
<div class="abs" style="left:459px;top:273px;width:151px;height:19px;border:1px solid #a0a0a0;background:#c8ecc8"></div>
<div class="t" style="left:460px;top:276px;width:149px;text-align:center;font-size:11px">02:56</div>
<div class="abs" style="left:459px;top:291px;width:151px;height:19px;border:1px solid #a0a0a0;background:#c8ecc8"></div>
<div class="t" style="left:460px;top:294px;width:149px;text-align:center;font-size:11px">03:31</div>
<div class="abs" style="left:459px;top:309px;width:151px;height:19px;border:1px solid #a0a0a0;background:#c8ecc8"></div>
<div class="t" style="left:460px;top:312px;width:149px;text-align:center;font-size:11px">04:06</div>
<div class="abs" style="left:459px;top:327px;width:151px;height:19px;border:1px solid #a0a0a0;background:#c8ecc8"></div>
<div class="t" style="left:460px;top:330px;width:149px;text-align:center;font-size:11px">04:41</div>
<div class="abs" style="left:459px;top:345px;width:151px;height:19px;border:1px solid #a0a0a0;background:#c8ecc8"></div>
<div class="t" style="left:460px;top:348px;width:149px;text-align:center;font-size:11px">05:16</div>
<div class="abs" style="left:459px;top:363px;width:151px;height:19px;border:1px solid #a0a0a0;background:#c8ecc8"></div>
<div class="t" style="left:460px;top:366px;width:149px;text-align:center;font-size:11px">05:51</div>
<div class="abs" style="left:459px;top:381px;width:151px;height:19px;border:1px solid #a0a0a0;background:#c8ecc8"></div>
<div class="t" style="left:460px;top:384px;width:149px;text-align:center;font-size:11px">06:26</div>
<div class="abs" style="left:459px;top:399px;width:151px;height:19px;border:1px solid #a0a0a0;background:#c8ecc8"></div>
<div class="t" style="left:460px;top:402px;width:149px;text-align:center;font-size:11px">07:01</div>
<div class="abs" style="left:459px;top:417px;width:151px;height:19px;border:1px solid #a0a0a0;background:#c8ecc8"></div>
<div class="t" style="left:460px;top:420px;width:149px;text-align:center;font-size:11px">07:36</div>
<div class="abs" style="left:459px;top:435px;width:151px;height:19px;border:1px solid #a0a0a0;background:#c8ecc8"></div>
<div class="t" style="left:460px;top:438px;width:149px;text-align:center;font-size:11px">08:11</div>
<div class="abs" style="left:459px;top:453px;width:151px;height:19px;border:1px solid #a0a0a0;background:#c8ecc8"></div>
<div class="t" style="left:460px;top:456px;width:149px;text-align:center;font-size:11px">08:46</div>
<div class="abs" style="left:459px;top:471px;width:151px;height:19px;border:1px solid #a0a0a0;background:#c8ecc8"></div>
<div class="t" style="left:460px;top:474px;width:149px;text-align:center;font-size:11px">09:21</div>
<div class="abs" style="left:459px;top:489px;width:151px;height:19px;border:1px solid #a0a0a0;background:#c8ecc8"></div>
<div class="t" style="left:460px;top:492px;width:149px;text-align:center;font-size:11px">09:56</div>
<div class="abs" style="left:459px;top:507px;width:151px;height:19px;border:1px solid #a0a0a0;background:#c8ecc8"></div>
<div class="t" style="left:460px;top:510px;width:149px;text-align:center;font-size:11px">10:31</div>
<div class="abs" style="left:459px;top:525px;width:151px;height:19px;border:1px solid #a0a0a0;background:#c8ecc8"></div>
<div class="t" style="left:460px;top:528px;width:149px;text-align:center;font-size:11px">11:06</div>
<div class="abs" style="left:459px;top:543px;width:151px;height:19px;border:1px solid #a0a0a0;background:#c8ecc8"></div>
<div class="t" style="left:460px;top:546px;width:149px;text-align:center;font-size:11px">11:41</div>
<div class="abs" style="left:459px;top:561px;width:151px;height:19px;border:1px solid #a0a0a0;background:#c8ecc8"></div>
<div class="t" style="left:460px;top:564px;width:149px;text-align:center;font-size:11px">12:16</div>
<div class="abs" style="left:459px;top:579px;width:151px;height:19px;border:1px solid #a0a0a0;background:#c8ecc8"></div>
<div class="t" style="left:460px;top:582px;width:149px;text-align:center;font-size:11px">12:51</div>
<div class="abs" style="left:459px;top:597px;width:151px;height:19px;border:1px solid #a0a0a0;background:#c8ecc8"></div>
<div class="t" style="left:460px;top:600px;width:149px;text-align:center;font-size:11px">13:26</div>
<div class="abs" style="left:459px;top:615px;width:151px;height:19px;border:1px solid #a0a0a0;background:#c8ecc8"></div>
<div class="t" style="left:460px;top:618px;width:149px;text-align:center;font-size:11px">14:01</div>
<div class="abs" style="left:459px;top:633px;width:151px;height:19px;border:1px solid #a0a0a0;background:#c8ecc8"></div>
<div class="t" style="left:460px;top:636px;width:149px;text-align:center;font-size:11px">14:36</div>
<div class="abs" style="left:459px;top:651px;width:151px;height:19px;border:1px solid #a0a0a0;background:#c8ecc8"></div>
<div class="t" style="left:460px;top:654px;width:149px;text-align:center;font-size:11px">15:11</div>
<div class="abs" style="left:459px;top:669px;width:151px;height:19px;border:1px solid #a0a0a0;background:#c8ecc8"></div>
<div class="t" style="left:460px;top:672px;width:149px;text-align:center;font-size:11px">15:46</div>
<div class="abs" style="left:459px;top:687px;width:151px;height:19px;border:1px solid #a0a0a0;background:#c8ecc8"></div>
<div class="t" style="left:460px;top:690px;width:149px;text-align:center;font-size:11px">16:21</div>
<div class="abs" style="left:459px;top:705px;width:151px;height:19px;border:1px solid #a0a0a0;background:#c8ecc8"></div>
<div class="t" style="left:460px;top:708px;width:149px;text-align:center;font-size:11px">16:56</div>
<div class="abs" style="left:459px;top:723px;width:151px;height:19px;border:1px solid #a0a0a0;background:#c8ecc8"></div>
<div class="t" style="left:460px;top:726px;width:149px;text-align:center;font-size:11px">17:31</div>
<div class="abs" style="left:459px;top:741px;width:151px;height:19px;border:1px solid #a0a0a0;background:#c8ecc8"></div>
<div class="t" style="left:460px;top:744px;width:149px;text-align:center;font-size:11px">18:06</div>
<div class="abs" style="left:459px;top:759px;width:151px;height:19px;border:1px solid #a0a0a0;background:#c8ecc8"></div>
<div class="t" style="left:460px;top:762px;width:149px;text-align:center;font-size:11px">18:41</div>
<div class="abs" style="left:459px;top:777px;width:151px;height:19px;border:1px solid #a0a0a0;background:#c8ecc8"></div>
<div class="t" style="left:460px;top:780px;width:149px;text-align:center;font-size:11px">19:16</div>
<div class="abs" style="left:459px;top:795px;width:151px;height:19px;border:1px solid #a0a0a0;background:#c8ecc8"></div>
<div class="t" style="left:460px;top:798px;width:149px;text-align:center;font-size:11px">19:51</div>
<div class="abs" style="left:459px;top:813px;width:151px;height:19px;border:1px solid #a0a0a0;background:#c8ecc8"></div>
<div class="t" style="left:460px;top:816px;width:149px;text-align:center;font-size:11px">20:26</div>
<div class="abs" style="left:459px;top:831px;width:151px;height:19px;border:1px solid #a0a0a0;background:#c8ecc8"></div>
<div class="t" style="left:460px;top:834px;width:149px;text-align:center;font-size:11px">21:01</div>
<div class="abs" style="left:459px;top:849px;width:151px;height:19px;border:1px solid #a0a0a0;background:#c8ecc8"></div>
<div class="t" style="left:460px;top:852px;width:149px;text-align:center;font-size:11px">21:36</div>
<div class="abs" style="left:459px;top:867px;width:151px;height:19px;border:1px solid #a0a0a0;background:#c8ecc8"></div>
<div class="t" style="left:460px;top:870px;width:149px;text-align:center;font-size:11px">22:11</div>
<div class="abs" style="left:459px;top:885px;width:151px;height:19px;border:1px solid #a0a0a0;background:#c8ecc8"></div>
<div class="t" style="left:460px;top:888px;width:149px;text-align:center;font-size:11px">22:46</div>
<div class="abs" style="left:459px;top:903px;width:151px;height:19px;border:1px solid #a0a0a0;background:#c8ecc8"></div>
<div class="t" style="left:460px;top:906px;width:149px;text-align:center;font-size:11px">23:21</div>
<div class="abs" style="left:426px;top:921px;width:183px;height:1px;background:#a0a0a0"></div>
<div class="abs" style="left:429px;top:925px;width:11px;height:11px;border:1px solid #a0a0a0;background:#f0f0f0"></div>
<div class="abs" style="left:432px;top:930px;width:5px;height:1px;background:#000"></div>
<div class="t" style="left:445px;top:924px;font-size:11px;letter-spacing:0.1px">Отделение : Ренген.служба</div>
<div class="abs" style="left:442px;top:939px;width:167px;height:1px;background:#a0a0a0"></div>
<div class="abs" style="left:442px;top:939px;width:1px;height:45px;background:#a0a0a0"></div>
<div class="abs" style="left:446px;top:943px;width:11px;height:11px;border:1px solid #a0a0a0;background:#f0f0f0"></div>
<div class="abs" style="left:449px;top:948px;width:5px;height:1px;background:#000"></div>
<div class="t" style="left:462px;top:942px;font-size:11px;letter-spacing:0.1px">Кабинет : 107</div>
<div class="abs" style="left:459px;top:957px;width:151px;height:19px;border:1px solid #a0a0a0;background:#c8ecc8"></div>
<div class="t" style="left:460px;top:960px;width:149px;text-align:center;font-size:11px">08:00</div>
<div class="abs" style="left:459px;top:975px;width:151px;height:19px;border:1px solid #a0a0a0;background:#c8ecc8"></div>
<div class="t" style="left:460px;top:978px;width:149px;text-align:center;font-size:11px">08:30</div>
<svg class="abs" style="left:416px;top:439px" width="8" height="11"><path d="M2 1L7 5.5L2 10Z" fill="#000"/></svg>
</div>
<div class="abs" style="left:732px;top:363px;width:726px;height:295px;background:#f0f0f0;border:1px solid #9a9a9a;box-shadow:0 3px 12px rgba(0,0,0,0.28)"></div>
<div class="abs" style="left:733px;top:364px;width:724px;height:30px;background:#fff"></div>
<svg class="abs" style="left:741px;top:369px" width="17" height="18"><defs><linearGradient id="gBk" x1="0" y1="0" x2="1" y2="1"><stop offset="0" stop-color="#9ad080"/><stop offset="1" stop-color="#3c8a2c"/></linearGradient></defs><rect x="3.5" y="1.5" width="11" height="14" rx="1" fill="#e8f2e4" stroke="#6a9a6a" stroke-width="0.8"/><rect x="1.5" y="2.5" width="11.5" height="14" rx="1.2" fill="url(#gBk)" stroke="#4a7a4a" stroke-width="0.8"/><rect x="4" y="4.5" width="6" height="1.5" fill="#e0f4d8"/><rect x="2.5" y="7" width="1.8" height="1" fill="#2d5a20"/><rect x="2.5" y="10" width="1.8" height="1" fill="#2d5a20"/></svg>
<div class="t" style="left:762px;top:372px;color:#999">Документ: Планирование времени оперативных вмешательств (Новый)</div>
<div class="abs" style="left:1338px;top:378px;width:10px;height:1px;background:#8a8a8a"></div>
<div class="abs" style="left:1383px;top:373px;width:10px;height:10px;border:1px solid #8a8a8a"></div>
<svg class="abs" style="left:1428px;top:372px" width="12" height="12"><path d="M1 1L11 11M11 1L1 11" stroke="#8a8a8a" stroke-width="1.1"/></svg>
<div class="abs" style="left:733px;top:394px;width:724px;height:26px;background:#f0f0f0"></div>
<div class="abs" style="left:733px;top:420px;width:724px;height:1px;background:#fff"></div>
<div class="abs" style="left:735px;top:396px;width:1px;height:22px;background:#8a8a8a"></div>
<svg class="abs" style="left:745px;top:397px" width="20" height="21"><rect x="1.5" y="1.5" width="11" height="16" fill="#fff" stroke="#3b6a8a"/><path d="M3 4.5h7M3 6.5h4M3 8.5h6M3 10.5h5" stroke="#555" stroke-width="1"/><path d="M4 13.5L6.5 16L11 11" stroke="#6aaa1a" stroke-width="2" fill="none"/><rect x="15" y="1" width="4" height="3" fill="#e88"/><rect x="15" y="4" width="4" height="11" fill="#2e6ca8"/><path d="M15 15L17 18L19 15Z" fill="#f0d890"/><rect x="16" y="17" width="2" height="2" fill="#000"/></svg>
<svg class="abs" style="left:773px;top:397px" width="20" height="21"><rect x="1.5" y="1.5" width="11" height="16" fill="#fff" stroke="#3b6a8a"/><path d="M3 4.5h7M3 6.5h4M3 8.5h6M3 10.5h3" stroke="#555" stroke-width="1"/><path d="M5.5 11.5L10.5 16.5M10.5 11.5L5.5 16.5" stroke="#b02020" stroke-width="1.8"/><rect x="15" y="1" width="4" height="3" fill="#e88"/><rect x="15" y="4" width="4" height="11" fill="#2e6ca8"/><path d="M15 15L17 18L19 15Z" fill="#f0d890"/><rect x="16" y="17" width="2" height="2" fill="#000"/></svg>
<div class="abs" style="left:797px;top:394px;width:80px;height:26px;border:1px solid #6b6b6b;background:#e5e5e5"></div>
<svg class="abs" style="left:804px;top:397px" width="24" height="21"><rect x="1.5" y="1.5" width="12" height="16" fill="#fff" stroke="#2e6ca8"/><path d="M3.5 4.5h6M3.5 6.5h4M3.5 8.5h5M3.5 10.5h5" stroke="#666" stroke-width="1"/><rect x="7" y="13" width="14" height="7" fill="#b03020"/><path d="M8.5 14.5v4h2M12 14.5h2v4h-2zM18.5 14.5h-2.5v4h2.5v-2h-1" stroke="#fff" stroke-width="1" fill="none"/></svg>
<div class="t" style="left:827px;top:400px;letter-spacing:-0.5px"><span class="u">И</span>стория</div>
<div class="abs" style="left:879px;top:396px;width:1px;height:22px;background:#8a8a8a"></div>
<div class="t" style="left:886px;top:400px;letter-spacing:-0.25px"><span style="color:#800000">Подпись:</span> <span style="color:#000080">Отсутствует</span></div>
<div class="abs" style="left:1008px;top:396px;width:1px;height:22px;background:#8a8a8a"></div>
<div class="t" style="left:1016px;top:400px;letter-spacing:-0.5px"><span style="color:#800000">Автор:</span> <span style="color:#000080">Администратор</span></div>
<div class="abs" style="left:1456px;top:421px;width:1px;height:236px;background:#a0a0a0"></div>
<div class="t" style="left:743px;top:431px">Номер:</div>
<div class="abs" style="left:797px;top:427px;width:80px;height:20px;border:1px solid #f00;background:#fff"></div>
<div class="t" style="left:743px;top:457px">Пациент:</div>
<div class="abs" style="left:797px;top:454px;width:655px;height:20px;border:1px solid #f00;background:#fff"></div>
<div class="t" style="left:743px;top:481px;letter-spacing:0.17px">Планируемая хирургическая операция:</div>
<div class="abs" style="left:1002px;top:478px;width:450px;height:20px;border:1px solid #f00;background:#fff"></div>
<div class="abs" style="left:1402px;top:455px;width:17px;height:18px;border:1px solid #b4b4b4;background:#f0f0f0"></div>
<div class="abs" style="left:1418px;top:455px;width:17px;height:18px;border:1px solid #b4b4b4;background:#f0f0f0"></div>
<div class="abs" style="left:1434px;top:455px;width:17px;height:18px;border:1px solid #b4b4b4;background:#f0f0f0"></div>
<div class="abs" style="left:1405px;top:463px;width:2px;height:2px;background:#000;box-shadow:4px 0 #000,8px 0 #000"></div>
<svg class="abs" style="left:1420px;top:458px" width="13" height="13"><circle cx="5" cy="5" r="3.5" fill="none" stroke="#000" stroke-width="1.3"/><line x1="7.5" y1="7.5" x2="10.5" y2="10.5" stroke="#000" stroke-width="2"/></svg>
<svg class="abs" style="left:1436px;top:458px" width="13" height="13"><path d="M2 2L11 11M11 2L2 11" stroke="#000" stroke-width="2"/></svg>
<div class="abs" style="left:1402px;top:479px;width:17px;height:18px;border:1px solid #b4b4b4;background:#f0f0f0"></div>
<div class="abs" style="left:1418px;top:479px;width:17px;height:18px;border:1px solid #b4b4b4;background:#f0f0f0"></div>
<div class="abs" style="left:1434px;top:479px;width:17px;height:18px;border:1px solid #b4b4b4;background:#f0f0f0"></div>
<div class="abs" style="left:1405px;top:487px;width:2px;height:2px;background:#000;box-shadow:4px 0 #000,8px 0 #000"></div>
<svg class="abs" style="left:1420px;top:482px" width="13" height="13"><circle cx="5" cy="5" r="3.5" fill="none" stroke="#000" stroke-width="1.3"/><line x1="7.5" y1="7.5" x2="10.5" y2="10.5" stroke="#000" stroke-width="2"/></svg>
<svg class="abs" style="left:1436px;top:482px" width="13" height="13"><path d="M2 2L11 11M11 2L2 11" stroke="#000" stroke-width="2"/></svg>
<div class="t" style="left:743px;top:505px;letter-spacing:0.25px">Длительность, мин.:</div>
<div class="abs" style="left:870px;top:503px;width:109px;height:19px;border:1px solid #f00;background:#fff"></div>
<div class="t" style="left:872px;top:505px">0</div>
<div class="abs" style="left:961px;top:504px;width:17px;height:9px;border:1px solid #b4b4b4;background:#f0f0f0"></div>
<div class="abs" style="left:961px;top:512px;width:17px;height:9px;border:1px solid #b4b4b4;background:#f0f0f0"></div>
<svg class="abs" style="left:965px;top:505px" width="9" height="16"><path d="M1.5 5L4.5 2L7.5 5Z M1.5 10.5L4.5 13.5L7.5 10.5Z" fill="#000"/></svg>
<div class="t" style="left:1003px;top:508px;letter-spacing:0.15px">Примечание:</div>
<div class="abs" style="left:1083px;top:506px;width:369px;height:105px;border:1px solid #a0a0a0;background:#fff"></div>
<div class="t" style="left:745px;top:531px;font-size:11px">Операционная: Опрационная гинекология</div>
<div class="abs" style="left:733px;top:624px;width:723px;height:1px;background:#a0a0a0"></div>
<div class="abs" style="left:733px;top:625px;width:723px;height:1px;background:#fff"></div>
<div class="abs" style="left:1110px;top:628px;width:115px;height:27px;border:1px solid #6b6b6b;background:#f0f0f0"></div>
<svg class="abs" style="left:1137px;top:631px" width="21" height="20"><rect x="4.5" y="1.5" width="11" height="6" fill="#fff" stroke="#333"/><rect x="1" y="5" width="19" height="9" rx="1.5" fill="#2e6ca8"/><circle cx="17" cy="7.5" r="0.9" fill="#fff"/><rect x="1" y="12.5" width="19" height="1" fill="#cfe0f0"/><rect x="4.5" y="11.5" width="11" height="7" fill="#fff" stroke="#333"/><path d="M6.5 14.5h7M6.5 16.5h7" stroke="#888"/></svg>
<div class="t" style="left:1160px;top:634px;letter-spacing:-0.3px"><span class="u">П</span>ечать</div>
<div class="abs" style="left:1228px;top:628px;width:144px;height:27px;border:1px solid #6b6b6b;background:#f0f0f0"></div>
<svg class="abs" style="left:1237px;top:633px" width="17" height="17"><rect x="1.5" y="1.5" width="10" height="13.5" fill="#fff" stroke="#5a7080"/><path d="M3 4.5h6M3 6.5h4M3 8.5h5" stroke="#777"/><path d="M4.5 11.5L7.5 14.5L13 9" stroke="#000" stroke-width="4.4" fill="none"/><path d="M4.5 11.5L7.5 14.5L13 9" stroke="#8ab050" stroke-width="2.4" fill="none"/></svg>
<div class="t" style="left:1256px;top:634px;letter-spacing:-0.35px"><span class="u">П</span>одписать и закрыть</div>
<div class="abs" style="left:1376px;top:628px;width:76px;height:27px;border:2px solid #555;background:#f0f0f0"></div>
<svg class="abs" style="left:1381px;top:632px" width="20" height="20"><path d="M2 2L18 18M18 2L2 18" stroke="#d03020" stroke-width="3.2"/></svg>
<div class="t" style="left:1403px;top:634px;letter-spacing:-0.25px"><span class="u">З</span>акрыть</div>
<div class="abs" style="left:0;top:984px;width:1530px;height:4px;background:#a0a0a0"></div>
<svg class="abs" style="left:0;top:984px" width="4" height="4"><path d="M0 0H3.5L0 3.5Z" fill="#fff"/></svg>
</body></html>
